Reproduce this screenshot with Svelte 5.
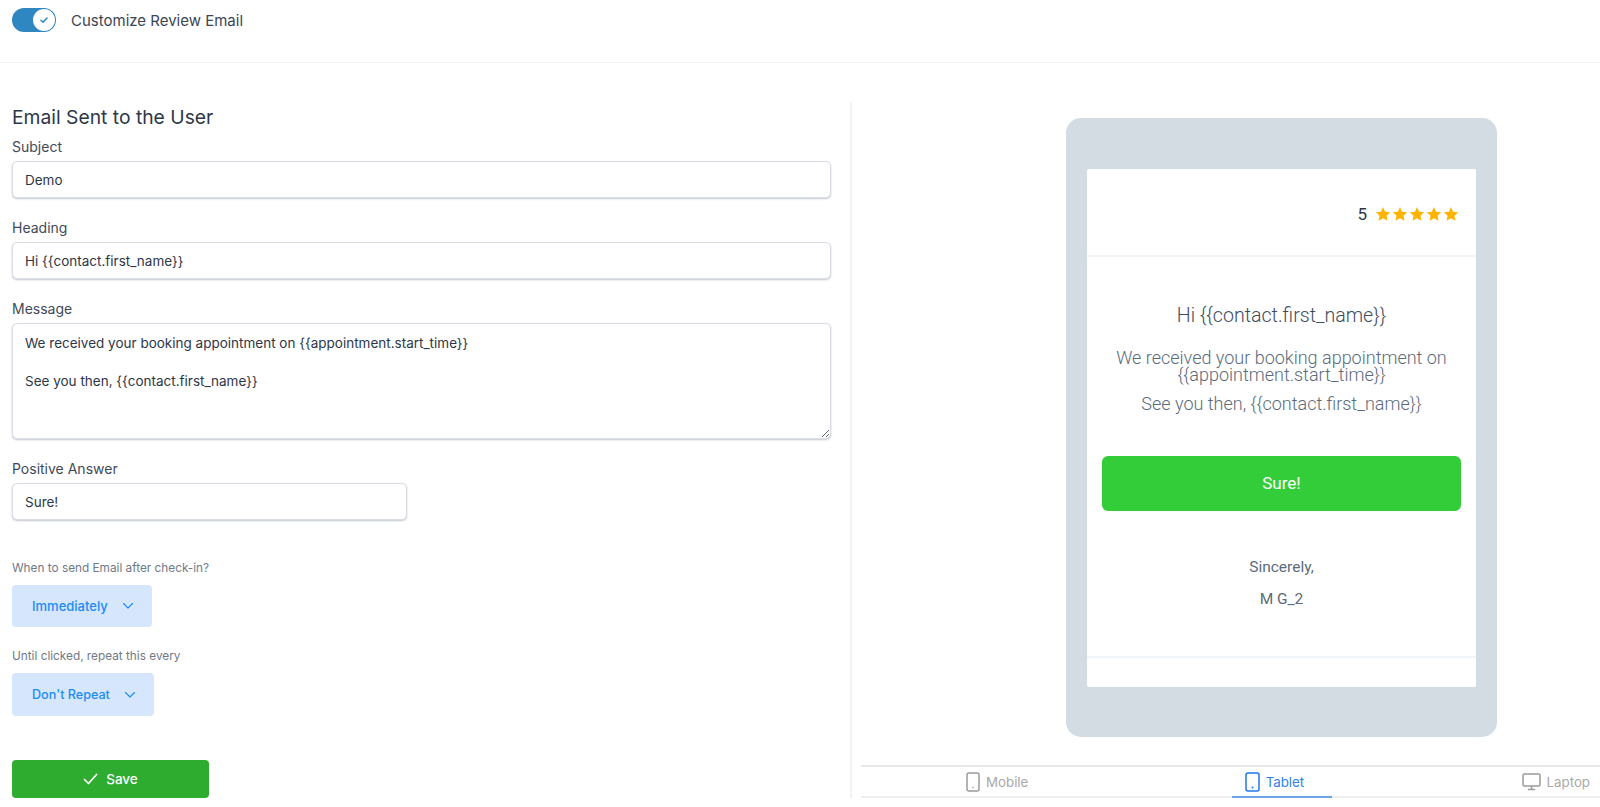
<script>
  let subject = $state('Demo')
  let heading = $state('Hi {{contact.first_name}}')
  let message = $state('We received your booking appointment on {{appointment.start_time}}\n\nSee you then, {{contact.first_name}}')
  let answer = $state('Sure!')

  const stars = [0, 1, 2, 3, 4]
</script>

<div class="page">
  <header class="top-bar">
    <div class="toggle">
      <span class="knob">
        <svg width="10" height="10" viewBox="0 0 10 10" fill="none">
          <path d="M2 5.2l2.1 2L8 3" stroke="#2b86c5" stroke-width="1.5" stroke-linecap="round" stroke-linejoin="round"/>
        </svg>
      </span>
    </div>
    <span class="toggle-label">Customize Review Email</span>
  </header>

  <main class="content">
    <section class="form">
      <h2>Email Sent to the User</h2>

      <label class="field">
        <span>Subject</span>
        <input bind:value={subject} />
      </label>
      <label class="field">
        <span>Heading</span>
        <input bind:value={heading} />
      </label>
      <label class="field">
        <span>Message</span>
        <textarea bind:value={message}></textarea>
      </label>
      <label class="field short">
        <span>Positive Answer</span>
        <input bind:value={answer} />
      </label>

      <p class="hint first">When to send Email after check-in?</p>
      <button class="dropdown immediate">
        Immediately
        <svg width="12" height="8" viewBox="0 0 12 8" fill="none">
          <path d="M1.5 1.5L6 6l4.5-4.5" stroke="currentColor" stroke-width="1.1" stroke-linecap="round" stroke-linejoin="round"/>
        </svg>
      </button>

      <p class="hint second">Until clicked, repeat this every</p>
      <button class="dropdown repeat">
        Don't Repeat
        <svg width="12" height="8" viewBox="0 0 12 8" fill="none">
          <path d="M1.5 1.5L6 6l4.5-4.5" stroke="currentColor" stroke-width="1.1" stroke-linecap="round" stroke-linejoin="round"/>
        </svg>
      </button>

      <button class="save">
        <svg width="15" height="12" viewBox="0 0 15 12" fill="none">
          <path d="M1.5 6.5L5.5 10.5L13.5 1.5" stroke="#fff" stroke-width="1.7" stroke-linecap="round" stroke-linejoin="round"/>
        </svg>
        Save
      </button>
    </section>

    <section class="preview">
      <div class="stage">
        <div class="device">
          <div class="screen">
            <div class="rating">
              <span class="score">5</span>
              <span class="stars">
                {#each stars as s (s)}
                  <svg width="16" height="16" viewBox="0 0 24 24">
                    <path d="M12 1.5l3.2 7 7.6.9-5.6 5.2 1.5 7.6L12 18.4l-6.7 3.8 1.5-7.6L1.2 9.4l7.6-.9z" fill="#ffb400"/>
                  </svg>
                {/each}
              </span>
            </div>
            <div class="mail-body">
              <h3>{heading}</h3>
              <p class="line wrapped">We received your booking appointment on {'{{appointment.start_time}}'}</p>
              <p class="line">See you then, {'{{contact.first_name}}'}</p>
              <div class="cta">{answer}</div>
              <p class="sign">Sincerely,</p>
              <p class="sign">M G_2</p>
            </div>
            <div class="mail-foot"></div>
          </div>
        </div>
      </div>

      <nav class="tabs">
        <div class="tab">
          <svg width="14" height="20" viewBox="0 0 14 20" fill="none">
            <rect x="1" y="1" width="12" height="18" rx="2" stroke="currentColor" stroke-width="1.5"/>
            <circle cx="7" cy="15.5" r="0.8" fill="currentColor"/>
          </svg>
          Mobile
        </div>
        <div class="tab active">
          <svg width="15" height="20" viewBox="0 0 15 20" fill="none">
            <rect x="1" y="1" width="13" height="18" rx="2" stroke="currentColor" stroke-width="1.5"/>
            <circle cx="7.5" cy="15.5" r="1" fill="currentColor"/>
          </svg>
          Tablet
        </div>
        <div class="tab last">
          <svg width="19" height="18" viewBox="0 0 19 18" fill="none">
            <rect x="1" y="1" width="17" height="12" rx="1.5" stroke="currentColor" stroke-width="1.5"/>
            <path d="M9.5 13v3M6 16.5h7" stroke="currentColor" stroke-width="1.5"/>
          </svg>
          Laptop
        </div>
      </nav>
    </section>
  </main>
</div>

<style>
  :global(body) {
    margin: 0;
    background: #fff;
    font-family: Inter, "Liberation Sans", sans-serif;
    color: #2d3748;
  }

  .page {
    height: 807px;
    overflow: hidden;
  }

  .top-bar {
    height: 63px;
    box-sizing: border-box;
    padding: 8px 12px 0;
    display: flex;
    align-items: flex-start;
    gap: 15px;
    border-bottom: 1px solid #f3f6f8;
  }

  .toggle {
    width: 44px;
    height: 24px;
    box-sizing: border-box;
    padding: 1px;
    border-radius: 12px;
    background: #2f87c2;
    display: flex;
    justify-content: flex-end;
  }

  .knob {
    width: 22px;
    height: 22px;
    border-radius: 50%;
    background: #fff;
    display: flex;
    align-items: center;
    justify-content: center;
  }

  .toggle-label {
    font-size: 15px;
    line-height: 25px;
    color: #3b4654;
  }

  .content {
    display: flex;
    padding-top: 39px;
  }

  .form {
    width: 852px;
    height: 696px;
    box-sizing: border-box;
    padding: 3px 19px 0 12px;
    border-right: 2px solid #f1f2f4;
  }

  h2 {
    margin: 0 0 8px;
    font-size: 19.3px;
    font-weight: 400;
    line-height: 24px;
    color: #2d3748;
  }

  .field {
    display: block;
    margin-bottom: 20px;
  }

  .field span {
    display: block;
    font-size: 14px;
    line-height: 19px;
    margin-bottom: 5px;
    color: #3f4a58;
  }

  .field.short {
    width: 395px;
    margin-bottom: 0;
  }

  input,
  textarea {
    display: block;
    width: 100%;
    box-sizing: border-box;
    border: 1px solid #d9dce3;
    border-radius: 5px;
    box-shadow: 0 1px 2px rgba(60, 70, 100, 0.3);
    font-family: inherit;
    font-size: 13.5px;
    color: #2d3748;
    padding: 0 12px;
    outline: none;
    background: #fff;
  }

  input {
    height: 37px;
  }

  textarea {
    height: 116px;
    padding-top: 10px;
    line-height: 19px;
    resize: vertical;
  }

  .hint {
    margin: 0;
    font-size: 11.8px;
    line-height: 16px;
    color: #6f7987;
  }

  .hint.first {
    margin-top: 40px;
  }

  .hint.second {
    margin-top: 21px;
  }

  .dropdown {
    display: flex;
    align-items: center;
    margin-top: 9px;
    padding: 0 0 0 20px;
    box-sizing: border-box;
    border: none;
    border-radius: 4px;
    background: #d5e6fd;
    color: #1c8cf5;
    font-family: inherit;
    font-size: 13px;
    font-weight: 500;
  }

  .immediate {
    width: 140px;
    height: 42px;
    gap: 14px;
  }

  .repeat {
    width: 142px;
    height: 43px;
    gap: 14px;
    font-size: 12.6px;
  }

  .save {
    display: flex;
    align-items: center;
    justify-content: center;
    gap: 8px;
    width: 197px;
    height: 38px;
    margin-top: 44px;
    border: none;
    border-radius: 4px;
    background: #2dac2f;
    color: #fff;
    font-family: inherit;
    font-size: 13.5px;
    font-weight: 500;
  }

  .preview {
    flex: 1;
    height: 696px;
    padding-left: 9px;
    display: flex;
    flex-direction: column;
    min-width: 0;
  }

  .stage {
    flex: 1;
    box-sizing: border-box;
    padding: 16px 0 0 205px;
  }

  .device {
    width: 431px;
    height: 619px;
    box-sizing: border-box;
    padding: 51px 21px 0;
    border-radius: 15px;
    background: #d3dbe3;
  }

  .screen {
    height: 518px;
    background: #fff;
    border-radius: 2px;
    display: flex;
    flex-direction: column;
    font-family: Roboto, "Liberation Sans", sans-serif;
    font-weight: 300;
    color: #5b6b7b;
    text-align: center;
  }

  .rating {
    height: 88px;
    flex: none;
    box-sizing: border-box;
    display: flex;
    justify-content: flex-end;
    align-items: center;
    gap: 8px;
    padding: 3px 17px 0 0;
    border-bottom: 2px solid #f1f5f9;
  }

  .score {
    font-size: 17px;
    font-weight: 400;
    color: #2d3748;
  }

  .stars {
    display: flex;
    gap: 1px;
  }

  .mail-body {
    flex: 1;
    padding: 46px 15px 0;
  }

  h3 {
    margin: 0 0 20px;
    font-size: 19.6px;
    font-weight: 300;
    line-height: 26px;
    color: #3e4c5b;
  }

  .line {
    margin: 0 0 12px;
    font-size: 18px;
    font-weight: 300;
    line-height: 17px;
  }

  .line.wrapped {
    padding: 0 5px;
  }

  .cta {
    height: 55px;
    margin-top: 44px;
    border-radius: 6px;
    background: #32cd38;
    color: #fff;
    font-size: 17px;
    font-weight: 400;
    line-height: 55px;
  }

  .sign {
    margin: 0 0 14px;
    font-size: 15.5px;
    font-weight: 400;
    line-height: 18px;
    color: #5b6b7b;
  }

  .cta + .sign {
    margin-top: 47px;
  }

  .mail-foot {
    height: 31px;
    flex: none;
    box-sizing: border-box;
    border-top: 2px solid #f1f5f9;
  }

  .tabs {
    height: 33px;
    flex: none;
    box-sizing: border-box;
    display: flex;
    justify-content: space-between;
    padding: 0 0 0 91px;
    border-top: 2px solid #e8e8e8;
    border-bottom: 2px solid #eeeeee;
  }

  .tab {
    display: flex;
    align-items: center;
    gap: 6px;
    font-size: 13.3px;
    color: #a9a9a9;
    padding: 0 14px 2px;
    height: 31px;
    box-sizing: border-box;
  }

  .tab svg {
    color: #9b9b9b;
  }

  .tab.active {
    color: #2f80ed;
    border-bottom: 2px solid #6ba4ea;
    padding: 0 28px 0 13px;
    margin-left: 14px;
  }

  .tab.active svg {
    color: #1f78ee;
  }

  .tab.last {
    padding-right: 10px;
  }
</style>
